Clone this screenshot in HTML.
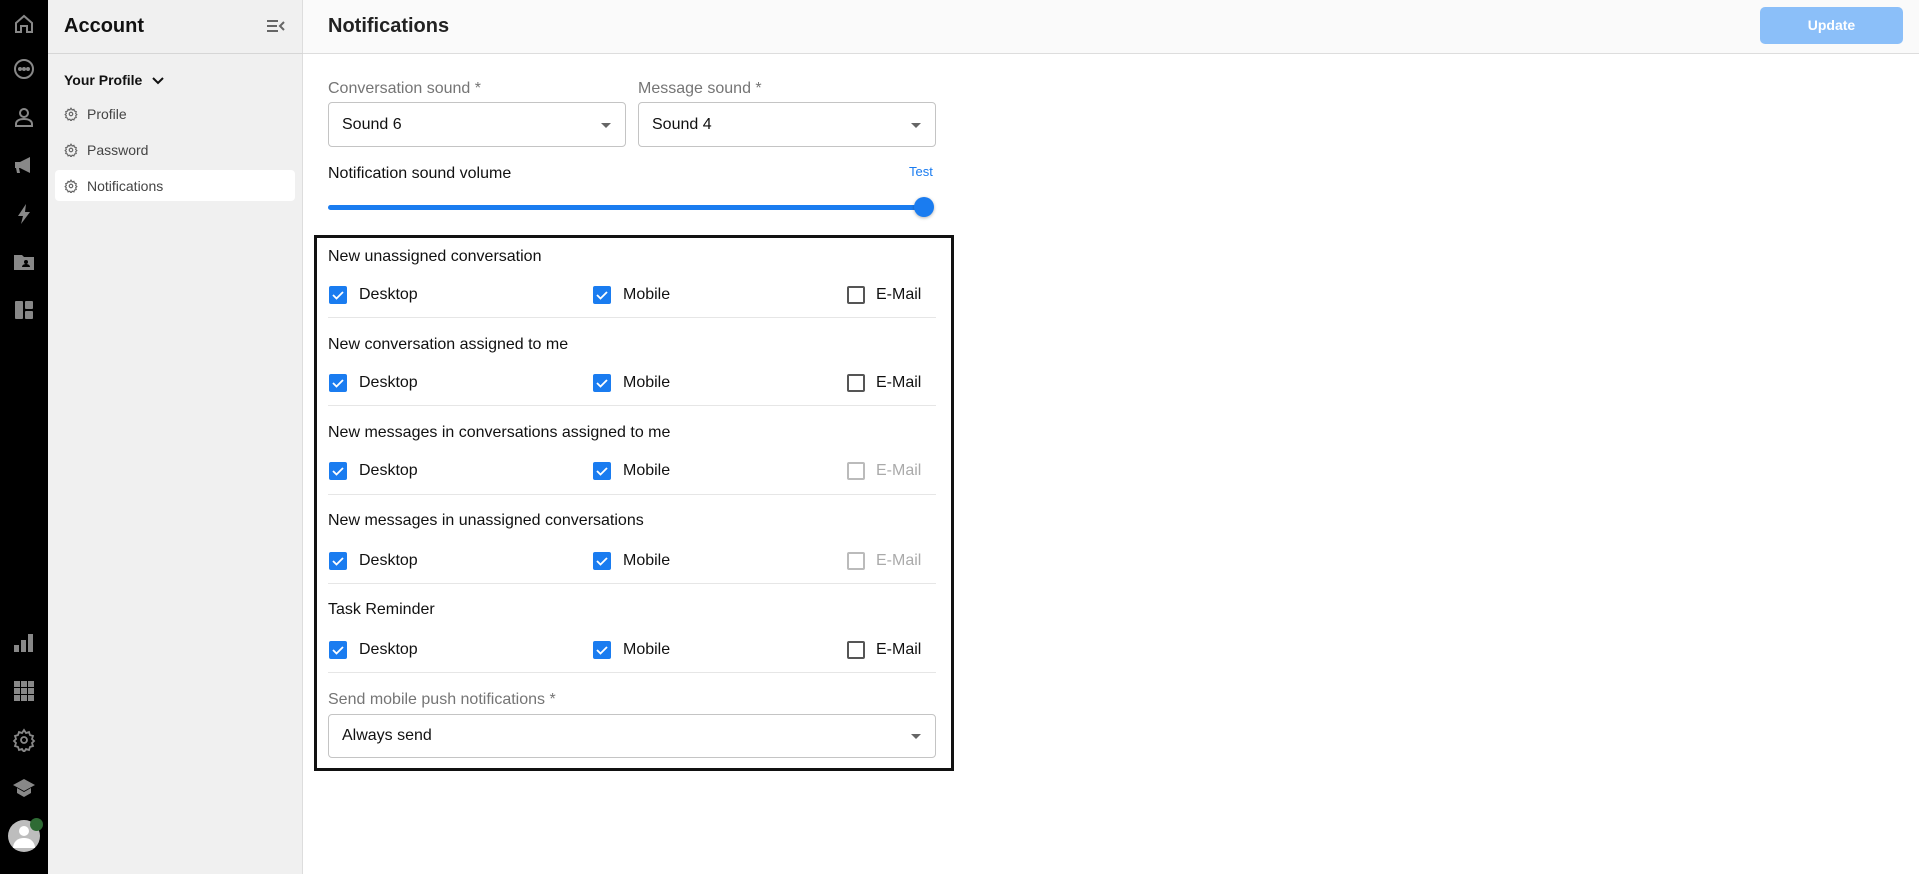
<!DOCTYPE html>
<html><head><meta charset="utf-8"><style>
*{box-sizing:border-box;margin:0;padding:0}
body{width:1919px;height:874px;overflow:hidden;font-family:"Liberation Sans",Arial,sans-serif;background:#fff;position:relative;color:#111}
.abs{position:absolute}
.rail{left:0;top:0;width:48px;height:874px;background:#000}
.rail svg{position:absolute;left:12px;width:24px;height:24px}
.panel{left:48px;top:0;width:255px;height:874px;background:#f0f0f0;border-right:1px solid #ddd}
.hdr{left:303px;top:0;width:1616px;height:54px;background:#fafafa;border-bottom:1px solid #ddd}
.t{position:absolute;white-space:nowrap;line-height:1}
.sel{position:absolute;border:1px solid #c4c4c4;border-radius:4px;background:#fff}
.sel span{position:absolute;left:13px;top:50%;transform:translateY(-50%);font-size:16px}
.sel i{position:absolute;right:14px;top:50%;margin-top:-2px;border-left:5px solid transparent;border-right:5px solid transparent;border-top:5px solid #666}
.lbl{font-size:16px;color:#757575}
.cb{position:absolute;width:18px;height:18px;border-radius:2px;background:#1a7cf0}
.cb svg{position:absolute;left:0;top:0}
.cbo{position:absolute;width:18px;height:18px;border:2px solid #555;border-radius:2px;background:#fff}
.cbo.d{border-color:#bbb}
.sep{position:absolute;left:328px;width:608px;height:1px;background:#e6e6e6}
.item{font-size:14px;color:#444}
</style></head><body>
<div class="abs rail">
<svg style="top:12px" viewBox="0 0 24 24" fill="none" stroke="#888" stroke-width="2"><path d="M4 11l8-7 8 7v9h-5v-6h-6v6H4z"/></svg>
<svg style="top:57px" viewBox="0 0 24 24" fill="none" stroke="#888" stroke-width="2"><circle cx="12" cy="12" r="9"/><circle cx="8" cy="12" r="1" fill="#888"/><circle cx="12" cy="12" r="1" fill="#888"/><circle cx="16" cy="12" r="1" fill="#888"/></svg>
<svg style="top:105px" viewBox="0 0 24 24" fill="none" stroke="#888" stroke-width="2"><circle cx="12" cy="8" r="4"/><path d="M4 21v-2c0-3 3-5 8-5s8 2 8 5v2z"/></svg>
<svg style="top:153px" viewBox="0 0 24 24" fill="#888"><path d="M3 9h5l10-5v16L8 15H7l1 5H5l-1-5H3z"/></svg>
<svg style="top:202px" viewBox="0 0 24 24" fill="#888"><path d="M14 2L6 14h5l-2 8 9-12h-5z"/></svg>
<svg style="top:250px" viewBox="0 0 24 24" fill="#888"><path d="M2 5h8l2 2h10v13H2z"/><circle cx="14" cy="12" r="2" fill="#000"/><path d="M10 17c0-2 2-3 4-3s4 1 4 3z" fill="#000"/></svg>
<svg style="top:298px" viewBox="0 0 24 24" fill="#888"><rect x="3" y="3" width="8" height="18" rx="1"/><rect x="13" y="3" width="8" height="8" rx="1"/><rect x="13" y="13" width="8" height="8" rx="1"/></svg>
<svg style="top:631px" viewBox="0 0 24 24" fill="#888"><rect x="2" y="14" width="5" height="7"/><rect x="9" y="9" width="5" height="12"/><rect x="16" y="3" width="5" height="18"/></svg>
<svg style="top:679px" viewBox="0 0 24 24" fill="#888"><rect x="2" y="2" width="6" height="6"/><rect x="9" y="2" width="6" height="6"/><rect x="16" y="2" width="6" height="6"/><rect x="2" y="9" width="6" height="6"/><rect x="9" y="9" width="6" height="6"/><rect x="16" y="9" width="6" height="6"/><rect x="2" y="16" width="6" height="6"/><rect x="9" y="16" width="6" height="6"/><rect x="16" y="16" width="6" height="6"/></svg>
<svg style="top:728px" viewBox="0 0 24 24" fill="none" stroke="#888" stroke-width="1.8"><circle cx="12" cy="12" r="3"/><path d="M12 2l2 3 3-1 1 3 3 1-1 3 2 2-2 2 1 3-3 1-1 3-3-1-2 3-2-3-3 1-1-3-3-1 1-3-2-2 2-2-1-3 3-1 1-3 3 1z"/></svg>
<svg style="top:776px" viewBox="0 0 24 24" fill="#888"><path d="M1 9l11-6 11 6-11 6z"/><path d="M5 12v5l7 4 7-4v-5l-7 4z"/></svg>
<div class="abs" style="left:8px;top:820px;width:32px;height:32px;border-radius:50%;background:#bdbdbd;overflow:hidden"><div class="abs" style="left:11px;top:6px;width:10px;height:10px;border-radius:50%;background:#fff"></div><div class="abs" style="left:5px;top:18px;width:22px;height:10px;border-radius:10px 10px 0 0;background:#fff"></div></div>
<div class="abs" style="left:30px;top:818px;width:13px;height:13px;border-radius:50%;background:#2e6b34"></div>
</div>
<div class="abs panel">
<div style="position:absolute;left:0;top:53px;width:255px;height:1px;background:#d6d6d6"></div>
<div class="t" style="left:16px;top:16px;font-size:20px;font-weight:bold;color:#111">Account</div>
<svg class="abs" style="left:218px;top:18px" width="20" height="16" viewBox="0 0 20 16" fill="none" stroke="#666" stroke-width="2"><path d="M1 3h11M1 8h10M1 13h11M18 4l-4 4 4 4"/></svg>
<div class="t" style="left:16px;top:73px;font-size:14px;font-weight:bold">Your Profile</div>
<svg class="abs" style="left:104px;top:76px" width="12" height="9" viewBox="0 0 12 9" fill="none" stroke="#111" stroke-width="2"><path d="M1 2l5 5 5-5"/></svg>
<div class="abs" style="left:7px;top:170px;width:240px;height:31px;background:#fff;border-radius:4px"></div>
<svg class="abs" style="left:16px;top:107px" width="14" height="14" viewBox="0 0 24 24" fill="none" stroke="#666" stroke-width="2"><circle cx="12" cy="12" r="3"/><path d="M12 2l2 3 3-1 1 3 3 1-1 3 2 2-2 2 1 3-3 1-1 3-3-1-2 3-2-3-3 1-1-3-3-1 1-3-2-2 2-2-1-3 3-1 1-3 3 1z"/></svg>
<div class="t item" style="left:39px;top:107px">Profile</div>
<svg class="abs" style="left:16px;top:143px" width="14" height="14" viewBox="0 0 24 24" fill="none" stroke="#666" stroke-width="2"><circle cx="12" cy="12" r="3"/><path d="M12 2l2 3 3-1 1 3 3 1-1 3 2 2-2 2 1 3-3 1-1 3-3-1-2 3-2-3-3 1-1-3-3-1 1-3-2-2 2-2-1-3 3-1 1-3 3 1z"/></svg>
<div class="t item" style="left:39px;top:143px">Password</div>
<svg class="abs" style="left:16px;top:179px" width="14" height="14" viewBox="0 0 24 24" fill="none" stroke="#666" stroke-width="2"><circle cx="12" cy="12" r="3"/><path d="M12 2l2 3 3-1 1 3 3 1-1 3 2 2-2 2 1 3-3 1-1 3-3-1-2 3-2-3-3 1-1-3-3-1 1-3-2-2 2-2-1-3 3-1 1-3 3 1z"/></svg>
<div class="t item" style="left:39px;top:179px">Notifications</div>
</div>
<div class="abs hdr">
<div class="t" style="left:25px;top:16px;font-size:20px;font-weight:bold;color:#222">Notifications</div>
<div class="abs" style="left:1457px;top:7px;width:143px;height:37px;border-radius:5px;background:#8bbff9;color:#fff;font-weight:bold;font-size:14px;text-align:center;line-height:37px">Update</div>
</div>

<div class="t lbl" style="left:328px;top:81px">Conversation sound *</div>
<div class="t lbl" style="left:638px;top:81px">Message sound *</div>
<div class="sel" style="left:328px;top:102px;width:298px;height:45px"><span>Sound 6</span><i></i></div>
<div class="sel" style="left:638px;top:102px;width:298px;height:45px"><span>Sound 4</span><i></i></div>
<div class="t" style="left:328px;top:166px;font-size:16px">Notification sound volume</div>
<div class="t" style="left:909px;top:165px;font-size:13px;color:#1a7cf0">Test</div>
<div class="abs" style="left:328px;top:205px;width:598px;height:5px;border-radius:3px;background:#1a7cf0"></div>
<div class="abs" style="left:914px;top:197px;width:20px;height:20px;border-radius:50%;background:#1a7cf0;box-shadow:0 1px 3px rgba(0,0,0,.3)"></div>

<div class="abs" style="left:314px;top:235px;width:640px;height:536px;border:3px solid #111"></div>

<div class="t" style="left:328px;top:249px;font-size:16px">New unassigned conversation</div>
<div class="t" style="left:328px;top:337px;font-size:16px">New conversation assigned to me</div>
<div class="t" style="left:328px;top:425px;font-size:16px">New messages in conversations assigned to me</div>
<div class="t" style="left:328px;top:513px;font-size:16px">New messages in unassigned conversations</div>
<div class="t" style="left:328px;top:602px;font-size:16px">Task Reminder</div>

<div class="cb" style="left:329px;top:286px"><svg width="18" height="18"><path d="M4 9l3.5 3.5L14 6" fill="none" stroke="#fff" stroke-width="1.8"/></svg></div>
<div class="t" style="left:359px;top:287px;font-size:16px">Desktop</div>
<div class="cb" style="left:593px;top:286px"><svg width="18" height="18"><path d="M4 9l3.5 3.5L14 6" fill="none" stroke="#fff" stroke-width="1.8"/></svg></div>
<div class="t" style="left:623px;top:287px;font-size:16px">Mobile</div>
<div class="cbo" style="left:847px;top:286px"></div>
<div class="t" style="left:876px;top:287px;font-size:16px">E-Mail</div>
<div class="sep" style="top:317px"></div>

<div class="cb" style="left:329px;top:374px"><svg width="18" height="18"><path d="M4 9l3.5 3.5L14 6" fill="none" stroke="#fff" stroke-width="1.8"/></svg></div>
<div class="t" style="left:359px;top:375px;font-size:16px">Desktop</div>
<div class="cb" style="left:593px;top:374px"><svg width="18" height="18"><path d="M4 9l3.5 3.5L14 6" fill="none" stroke="#fff" stroke-width="1.8"/></svg></div>
<div class="t" style="left:623px;top:375px;font-size:16px">Mobile</div>
<div class="cbo" style="left:847px;top:374px"></div>
<div class="t" style="left:876px;top:375px;font-size:16px">E-Mail</div>
<div class="sep" style="top:405px"></div>

<div class="cb" style="left:329px;top:462px"><svg width="18" height="18"><path d="M4 9l3.5 3.5L14 6" fill="none" stroke="#fff" stroke-width="1.8"/></svg></div>
<div class="t" style="left:359px;top:463px;font-size:16px">Desktop</div>
<div class="cb" style="left:593px;top:462px"><svg width="18" height="18"><path d="M4 9l3.5 3.5L14 6" fill="none" stroke="#fff" stroke-width="1.8"/></svg></div>
<div class="t" style="left:623px;top:463px;font-size:16px">Mobile</div>
<div class="cbo d" style="left:847px;top:462px"></div>
<div class="t" style="left:876px;top:463px;font-size:16px;color:#aaa">E-Mail</div>
<div class="sep" style="top:494px"></div>

<div class="cb" style="left:329px;top:552px"><svg width="18" height="18"><path d="M4 9l3.5 3.5L14 6" fill="none" stroke="#fff" stroke-width="1.8"/></svg></div>
<div class="t" style="left:359px;top:553px;font-size:16px">Desktop</div>
<div class="cb" style="left:593px;top:552px"><svg width="18" height="18"><path d="M4 9l3.5 3.5L14 6" fill="none" stroke="#fff" stroke-width="1.8"/></svg></div>
<div class="t" style="left:623px;top:553px;font-size:16px">Mobile</div>
<div class="cbo d" style="left:847px;top:552px"></div>
<div class="t" style="left:876px;top:553px;font-size:16px;color:#aaa">E-Mail</div>
<div class="sep" style="top:583px"></div>

<div class="cb" style="left:329px;top:641px"><svg width="18" height="18"><path d="M4 9l3.5 3.5L14 6" fill="none" stroke="#fff" stroke-width="1.8"/></svg></div>
<div class="t" style="left:359px;top:642px;font-size:16px">Desktop</div>
<div class="cb" style="left:593px;top:641px"><svg width="18" height="18"><path d="M4 9l3.5 3.5L14 6" fill="none" stroke="#fff" stroke-width="1.8"/></svg></div>
<div class="t" style="left:623px;top:642px;font-size:16px">Mobile</div>
<div class="cbo" style="left:847px;top:641px"></div>
<div class="t" style="left:876px;top:642px;font-size:16px">E-Mail</div>
<div class="sep" style="top:672px"></div>

<div class="t lbl" style="left:328px;top:692px">Send mobile push notifications *</div>
<div class="sel" style="left:328px;top:714px;width:608px;height:44px"><span>Always send</span><i></i></div>
</body></html>
